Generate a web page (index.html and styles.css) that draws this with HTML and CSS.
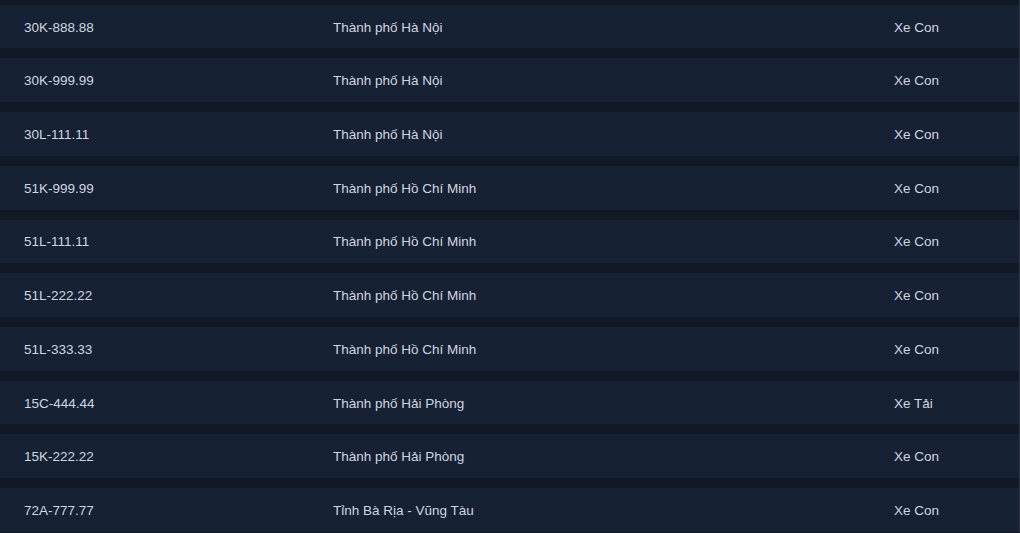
FILE: index.html
```html
<!DOCTYPE html>
<html lang="vi">
<head>
<meta charset="utf-8">
<title>Biển số</title>
<link rel="stylesheet" href="styles.css">
</head>
<body>
<div class="list">
  <div class="row"><span class="c1">30K-888.88</span><span class="c2">Thành phố Hà Nội</span><span class="c3">Xe Con</span></div>
  <div class="row"><span class="c1">30K-999.99</span><span class="c2">Thành phố Hà Nội</span><span class="c3">Xe Con</span></div>
  <div class="row"><span class="c1">30L-111.11</span><span class="c2">Thành phố Hà Nội</span><span class="c3">Xe Con</span></div>
  <div class="row"><span class="c1">51K-999.99</span><span class="c2">Thành phố Hồ Chí Minh</span><span class="c3">Xe Con</span></div>
  <div class="row"><span class="c1">51L-111.11</span><span class="c2">Thành phố Hồ Chí Minh</span><span class="c3">Xe Con</span></div>
  <div class="row"><span class="c1">51L-222.22</span><span class="c2">Thành phố Hồ Chí Minh</span><span class="c3">Xe Con</span></div>
  <div class="row"><span class="c1">51L-333.33</span><span class="c2">Thành phố Hồ Chí Minh</span><span class="c3">Xe Con</span></div>
  <div class="row"><span class="c1">15C-444.44</span><span class="c2">Thành phố Hải Phòng</span><span class="c3">Xe Tải</span></div>
  <div class="row"><span class="c1">15K-222.22</span><span class="c2">Thành phố Hải Phòng</span><span class="c3">Xe Con</span></div>
  <div class="row"><span class="c1">72A-777.77</span><span class="c2">Tỉnh Bà Rịa - Vũng Tàu</span><span class="c3">Xe Con</span></div>
</div>
</body>
</html>
```
FILE: styles.css
```css
html, body {
  margin: 0;
  padding: 0;
  background: #111927;
  height: 100%;
  overflow: hidden;
}
body {
  font-family: "Liberation Sans", Arial, sans-serif;
  font-size: 13.5px;
  color: #cfd6e0;
}
.list {
  display: flex;
  flex-direction: column;
  gap: 10px;
  padding-top: 4.7px;
  border-right: 1px solid #2a3446;
  box-sizing: border-box;
  width: 1020px;
}
.row {
  display: grid;
  grid-template-columns: 309px 561px 1fr;
  align-items: center;
  height: 43.72px;
  padding-top: 1px;
  box-sizing: border-box;
  background: #172134;
}
.row span {
  padding-left: 24px;
  white-space: nowrap;
}
```
